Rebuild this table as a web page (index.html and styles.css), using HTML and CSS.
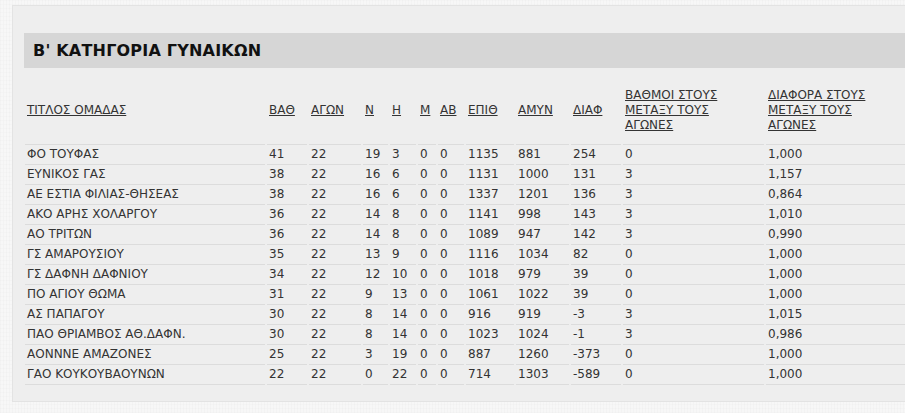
FILE: index.html
```html
<!DOCTYPE html>
<html lang="el">
<head>
<meta charset="utf-8">
<title>Β' ΚΑΤΗΓΟΡΙΑ ΓΥΝΑΙΚΩΝ</title>
<link rel="stylesheet" href="styles.css">
</head>
<body>
<div class="panel">
  <h2 class="title">Β' ΚΑΤΗΓΟΡΙΑ ΓΥΝΑΙΚΩΝ</h2>
  <table class="standings">
    <colgroup>
      <col class="c1"><col class="c2"><col class="c3"><col class="c4"><col class="c5"><col class="c6">
      <col class="c7"><col class="c8"><col class="c9"><col class="c10"><col class="c11"><col class="c12">
    </colgroup>
    <thead>
      <tr>
        <th><a href="#">ΤΙΤΛΟΣ ΟΜΑΔΑΣ</a></th>
        <th><a href="#">ΒΑΘ</a></th>
        <th><a href="#">ΑΓΩΝ</a></th>
        <th><a href="#">Ν</a></th>
        <th><a href="#">Η</a></th>
        <th><a href="#">Μ</a></th>
        <th><a href="#">ΑΒ</a></th>
        <th><a href="#">ΕΠΙΘ</a></th>
        <th><a href="#">ΑΜΥΝ</a></th>
        <th><a href="#">ΔΙΑΦ</a></th>
        <th><a class="wrap" href="#">ΒΑΘΜΟΙ ΣΤΟΥΣ ΜΕΤΑΞΥ ΤΟΥΣ ΑΓΩΝΕΣ</a></th>
        <th><a class="wrap" href="#">ΔΙΑΦΟΡΑ ΣΤΟΥΣ ΜΕΤΑΞΥ ΤΟΥΣ ΑΓΩΝΕΣ</a></th>
      </tr>
    </thead>
    <tbody>
      <tr><td>ΦΟ ΤΟΥΦΑΣ</td><td>41</td><td>22</td><td>19</td><td>3</td><td>0</td><td>0</td><td>1135</td><td>881</td><td>254</td><td>0</td><td>1,000</td></tr>
      <tr><td>ΕΥΝΙΚΟΣ ΓΑΣ</td><td>38</td><td>22</td><td>16</td><td>6</td><td>0</td><td>0</td><td>1131</td><td>1000</td><td>131</td><td>3</td><td>1,157</td></tr>
      <tr><td>ΑΕ ΕΣΤΙΑ ΦΙΛΙΑΣ-ΘΗΣΕΑΣ</td><td>38</td><td>22</td><td>16</td><td>6</td><td>0</td><td>0</td><td>1337</td><td>1201</td><td>136</td><td>3</td><td>0,864</td></tr>
      <tr><td>ΑΚΟ ΑΡΗΣ ΧΟΛΑΡΓΟΥ</td><td>36</td><td>22</td><td>14</td><td>8</td><td>0</td><td>0</td><td>1141</td><td>998</td><td>143</td><td>3</td><td>1,010</td></tr>
      <tr><td>ΑΟ ΤΡΙΤΩΝ</td><td>36</td><td>22</td><td>14</td><td>8</td><td>0</td><td>0</td><td>1089</td><td>947</td><td>142</td><td>3</td><td>0,990</td></tr>
      <tr><td>ΓΣ ΑΜΑΡΟΥΣΙΟΥ</td><td>35</td><td>22</td><td>13</td><td>9</td><td>0</td><td>0</td><td>1116</td><td>1034</td><td>82</td><td>0</td><td>1,000</td></tr>
      <tr><td>ΓΣ ΔΑΦΝΗ ΔΑΦΝΙΟΥ</td><td>34</td><td>22</td><td>12</td><td>10</td><td>0</td><td>0</td><td>1018</td><td>979</td><td>39</td><td>0</td><td>1,000</td></tr>
      <tr><td>ΠΟ ΑΓΙΟΥ ΘΩΜΑ</td><td>31</td><td>22</td><td>9</td><td>13</td><td>0</td><td>0</td><td>1061</td><td>1022</td><td>39</td><td>0</td><td>1,000</td></tr>
      <tr><td>ΑΣ ΠΑΠΑΓΟΥ</td><td>30</td><td>22</td><td>8</td><td>14</td><td>0</td><td>0</td><td>916</td><td>919</td><td>-3</td><td>3</td><td>1,015</td></tr>
      <tr><td>ΠΑΟ ΘΡΙΑΜΒΟΣ ΑΘ.ΔΑΦΝ.</td><td>30</td><td>22</td><td>8</td><td>14</td><td>0</td><td>0</td><td>1023</td><td>1024</td><td>-1</td><td>3</td><td>0,986</td></tr>
      <tr><td>ΑΟΝΝΝΕ ΑΜΑΖΟΝΕΣ</td><td>25</td><td>22</td><td>3</td><td>19</td><td>0</td><td>0</td><td>887</td><td>1260</td><td>-373</td><td>0</td><td>1,000</td></tr>
      <tr><td>ΓΑΟ ΚΟΥΚΟΥΒΑΟΥΝΩΝ</td><td>22</td><td>22</td><td>0</td><td>22</td><td>0</td><td>0</td><td>714</td><td>1303</td><td>-589</td><td>0</td><td>1,000</td></tr>
    </tbody>
  </table>
</div>
</body>
</html>
```
FILE: styles.css
```css
html, body {
  margin: 0;
  padding: 0;
  overflow: hidden;
}
body {
  background-color: #f7f7f7;
  background-image:
    repeating-linear-gradient(90deg, rgba(0,0,0,0.015) 0 1px, transparent 1px 3px),
    repeating-linear-gradient(0deg, rgba(0,0,0,0.012) 0 1px, transparent 1px 4px);
  font-family: "DejaVu Sans", Verdana, sans-serif;
  font-size: 12px;
  color: #333;
  width: 905px;
  height: 413px;
}
.panel {
  margin: 5px 0 0 12px;
  width: 940px;
  box-sizing: border-box;
  background: #eeeeee;
  border: 1px solid #e3e3e3;
  padding: 27px 0 16px 11px;
}
.title {
  margin: 0;
  height: 35px;
  line-height: 35px;
  background: #d6d6d6;
  padding-left: 9px;
  font-size: 16px;
  letter-spacing: 0.2px;
  font-weight: bold;
  color: #111;
}
.standings {
  margin: 12px 0 0 -1px;
  border-collapse: separate;
  border-spacing: 2px 0;
  table-layout: fixed;
  width: 886px;
}
.c1 { width: 240px; }
.c2 { width: 40px; }
.c3 { width: 52px; }
.c4 { width: 25px; }
.c5 { width: 26px; }
.c6 { width: 18px; }
.c7 { width: 26px; }
.c8 { width: 48px; }
.c9 { width: 53px; }
.c10 { width: 50px; }
.c11 { width: 141px; }
.c12 { width: 141px; }
.standings th,
.standings td {
  text-align: left;
  padding: 2px 0 2px 2px;
  line-height: 15px;
  border-bottom: 1px solid #dcdcdc;
  white-space: nowrap;
}
.standings th {
  font-weight: normal;
  padding-top: 8px;
  padding-bottom: 11px;
  vertical-align: middle;
  white-space: normal;
}
.standings th a {
  color: #333;
  text-decoration: underline;
}
.standings th a.wrap {
  display: inline-block;
  max-width: 112px;
}
```
